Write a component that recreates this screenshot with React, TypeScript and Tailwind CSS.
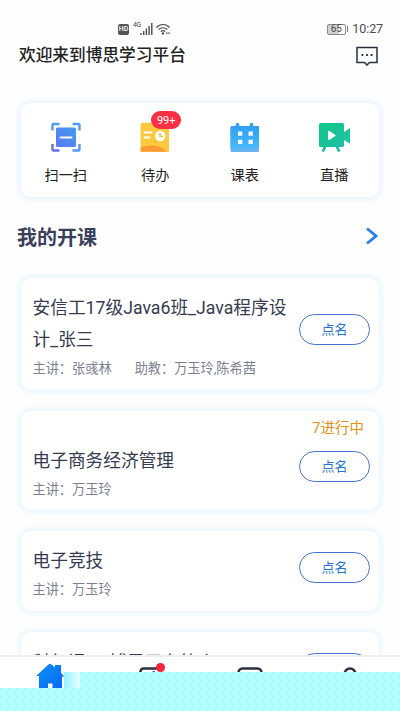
import type { ReactNode } from 'react';

interface Course {
  title: string;
  teacher: string;
  assistant?: string;
  status?: string;
  cardClass: string;
  titleClass: string;
  buttonClass: string;
}

const courses: Course[] = [
  {
    title: '安信工17级Java6班_Java程序设计_张三',
    teacher: '张彧林',
    assistant: '万玉玲,陈希茜',
    cardClass: 'h-[112px] pt-[14px]',
    titleClass: 'leading-8',
    buttonClass: 'mt-[22px]',
  },
  {
    title: '电子商务经济管理',
    teacher: '万玉玲',
    status: '7进行中',
    cardClass: 'h-[99px] pt-[7px]',
    titleClass: 'mt-[27px] leading-8',
    buttonClass: 'mt-[12px]',
  },
  {
    title: '电子竞技',
    teacher: '万玉玲',
    cardClass: 'h-[80px] pt-[14px]',
    titleClass: 'leading-8',
    buttonClass: 'mt-[7px]',
  },
  {
    title: '科幻课7—博思平台简介',
    teacher: '万玉玲',
    cardClass: 'h-[80px] pt-[15px]',
    titleClass: 'leading-8',
    buttonClass: 'mt-[6px]',
  },
];

const ScanIcon = () => (
  <svg width="30" height="30" viewBox="0 0 30 30" fill="none">
    <defs>
      <linearGradient id="scan" x1="0" y1="1" x2="1" y2="0">
        <stop stopColor="#5a78ee" />
        <stop offset="1" stopColor="#459bf5" />
      </linearGradient>
    </defs>
    <path d="M1.500 8.500V3a1 1 0 0 1 1-1H8.500M21.500 2H27.500a1 1 0 0 1 1 1v5.500M28.500 22v5.500a1 1 0 0 1-1 1H21.500" stroke="#4f9af0" strokeWidth="2.400" />
    <path d="M8.500 28.500H2.500a1 1 0 0 1-1-1V22" stroke="#6672dc" strokeWidth="2.400" />
    <rect x="5" y="5.500" width="20" height="19.500" rx="1.500" fill="url(#scan)" />
    <path d="M9.500 15.500h11" stroke="#fff" strokeWidth="2" strokeLinecap="round" />
  </svg>
);

const TodoIcon = () => (
  <svg width="30" height="30" viewBox="0 0 30 30" fill="none">
    <rect x=".6" y=".8" width="28.500" height="29" rx="1.500" fill="#fec93f" />
    <path d="M.6 25.500C9 22 22 23 27 29.800H2a1.400 1.400 0 0 1-1.400-1.400z" fill="#fb9b35" />
    <path d="M4.500 10.500h7M4.500 15.500h5" stroke="#fff" strokeWidth="2" strokeLinecap="round" />
    <circle cx="20.300" cy="14" r="5.200" fill="#fff" />
    <path d="M20 11v3.500h3" stroke="#f6b833" strokeWidth="1.500" />
  </svg>
);

const CalendarIcon = () => (
  <svg width="30" height="30" viewBox="0 0 30 30" fill="none">
    <defs>
      <linearGradient id="cal" x1="0" y1="0" x2="0" y2="1">
        <stop stopColor="#2f9ff2" />
        <stop offset="1" stopColor="#46b9fa" />
      </linearGradient>
    </defs>
    <path d="M7.500 2.500V6M21.500 2.500V6" stroke="#3a9fe8" strokeWidth="3.600" strokeLinecap="round" />
    <rect x=".5" y="4" width="28.500" height="26" rx="1.500" fill="#63b4ef" />
    <path d="M.5 5.500A1.500 1.500 0 0 1 2 4h25.500A1.500 1.500 0 0 1 29 5.500V26H.5z" fill="url(#cal)" />
    <path d="M8 9.500h4.300v4.300H8zM18.500 9.500h4.300v4.300h-4.300zM8 17.800h4.300v4.300H8zM18.500 17.800h4.300v4.300h-4.300z" fill="#fff" />
  </svg>
);

const LiveIcon = () => (
  <svg width="34" height="30" viewBox="0 0 34 30" fill="none">
    <defs>
      <linearGradient id="live" x1="0" y1="0" x2="1" y2="1">
        <stop stopColor="#10c886" />
        <stop offset="1" stopColor="#1fbda5" />
      </linearGradient>
    </defs>
    <path d="m8.500 24-2.800 5.500M19.500 24l2.800 5.500" stroke="#1cb99d" strokeWidth="2.600" />
    <path d="M25 11.500 33 6v15.500L25 17z" fill="#20c3a0" />
    <rect x="2" y="1" width="25" height="24" rx="1.500" fill="url(#live)" />
    <path d="M11 9.500c0-.8.800-1 1.300-.7l5.800 4c.6.400.6 1 0 1.400l-5.800 3.800c-.5.300-1.300 0-1.300-.7z" fill="#fff" />
  </svg>
);

const shortcuts: { label: string; icon: ReactNode; badge?: string }[] = [
  { label: '扫一扫', icon: <ScanIcon /> },
  { label: '待办', icon: <TodoIcon />, badge: '99+' },
  { label: '课表', icon: <CalendarIcon /> },
  { label: '直播', icon: <LiveIcon /> },
];

function StatusBar() {
  return (
    <div className="flex h-[37px] items-end justify-between pr-[17px] pl-[118px] text-[#4c4c4c]">
      <div className="flex h-[16px] items-center">
        <span className="flex h-[11px] w-[11px] items-center justify-center rounded-[2px] bg-[#555] text-[7px] leading-none font-medium text-white">HD</span>
        <span className="ml-[4px] self-start text-[7px] leading-[8px] tracking-[-0.5px]">4G</span>
        <svg width="13" height="12" viewBox="0 0 13 12" className="-ml-px" stroke="currentColor" strokeWidth="1.400">
          <path d="M1 12v-2M3.700 12V8M6.400 12V5.500M9.100 12V3M11.800 12V0" />
        </svg>
        <svg width="14" height="12" viewBox="0 0 14 12" className="ml-[3px]" fill="none" stroke="currentColor" strokeWidth="1.200">
          <path d="M.5 4.500c3.500-4 9.500-4 13 0M2.600 6.700c2.500-2.600 6.300-2.600 8.800 0M4.800 8.600c1.300-1.200 3.100-1.200 4.400 0" />
          <circle cx="7" cy="10.500" r=".6" />
          <path d="M10 10.200h4" strokeDasharray="1.600 .6" />
        </svg>
      </div>
      <div className="flex h-[16px] items-center">
        <div className="flex h-[11px] w-[19px] items-center justify-center rounded-[2px] border border-[#888] bg-linear-to-r from-[#cfcfcf] from-65% to-white to-65% text-[10px] leading-none">65</div>
        <div className="ml-px h-[6px] w-[1.500px] bg-[#777]" />
        <span className="ml-[4px] text-[12.500px] leading-none tracking-[-0.1px]">10:27</span>
      </div>
    </div>
  );
}

function CourseCard({ course }: { course: Course }) {
  return (
    <div className={`flex shrink-0 justify-between rounded-[10px] bg-white pr-[9px] pl-[11.500px] shadow-[0_0_6px_2px_#e4f4fd] ${course.cardClass}`}>
      <div className="w-[264px]">
        <h3 className={`text-[17.700px] text-[#363b50] ${course.titleClass}`}>{course.title}</h3>
        <p className="text-[13.200px] leading-[25px] text-[#7c8190]">
          <span>主讲：{course.teacher}</span>
          {course.assistant && <span className="ml-[23px]">助教：{course.assistant}</span>}
        </p>
      </div>
      <div className="flex shrink-0 flex-col items-end">
        {course.status && <span className="mr-[6px] text-[14.500px] leading-[21px] text-[#e6910f]">{course.status}</span>}
        <button className={`h-[31px] w-[71px] rounded-full border border-[#4573cf] text-[13px] leading-none text-[#2672d2] ${course.buttonClass}`}>
          点名
        </button>
      </div>
    </div>
  );
}

function TabBar() {
  return (
    <nav className="absolute inset-x-0 bottom-0 h-[56px] border-t-2 border-[#eeeeef] bg-white">
      <div className="flex h-full items-start pl-[36px]">
        <svg width="28" height="29" viewBox="0 0 28 29" className="mt-[6px]">
          <defs>
            <linearGradient id="home" x1="0" y1="0" x2="1" y2="1">
              <stop stopColor="#0b91fb" />
              <stop offset="1" stopColor="#0866ee" />
            </linearGradient>
          </defs>
          <path d="M0 13 12.500 1.500q1.500-1.300 3 0L19 4.500V2h6v8l3.500 3.500H26V29H3V13z" fill="url(#home)" />
          <path d="M12 29v-8.500h4.500V29z" fill="#fff" />
        </svg>
        <div className="relative mt-[10px] ml-[75px]">
          <svg width="24" height="24" viewBox="0 0 24 24" fill="none" stroke="#2b3042" strokeWidth="2.600">
            <path d="M1.500 22V4.500a3 3 0 0 1 3-3H19M12 7l4-2" />
          </svg>
          <span className="absolute -top-[4px] left-[17px] h-[9px] w-[9px] rounded-full bg-[#f5223a]" />
        </div>
        <svg width="26" height="24" viewBox="0 0 26 24" className="mt-[10px] ml-[74px]" fill="none" stroke="#2b3042" strokeWidth="2.600">
          <rect x="1.500" y="1.500" width="23" height="20" rx="4" />
        </svg>
        <svg width="20" height="24" viewBox="0 0 20 24" className="mt-[10px] ml-[77px]" fill="none" stroke="#2b3042" strokeWidth="2.600">
          <circle cx="10" cy="7" r="5.500" />
        </svg>
      </div>
      {/* dotted wash over the lower part of the bar */}
      <svg width="400" height="39" viewBox="0 0 400 39" className="absolute bottom-0 left-0">
        <defs>
          <pattern id="dots" width="8" height="8" patternUnits="userSpaceOnUse">
            <rect width="8" height="8" fill="#b1fffe" />
            <rect width="1" height="1" fill="#7eeaf5" />
          </pattern>
          <linearGradient id="fade">
            <stop stopColor="#93f4ff" />
            <stop offset="1" stopColor="#e9fcff" />
          </linearGradient>
        </defs>
        <path d="M0 16h80V0h320v39H0z" fill="url(#dots)" />
        <path d="M64 0h16v16H64z" fill="url(#fade)" />
      </svg>
    </nav>
  );
}

export default function App() {
  return (
    <div className="relative h-[711px] w-[400px] overflow-hidden bg-[#fefefe] font-[Roboto,'Noto_Sans_CJK_SC',sans-serif]">
      <StatusBar />
      <header className="flex h-[38px] items-center justify-between pr-[22px] pl-[19px]">
        <h1 className="pt-px text-[16.700px] leading-none font-medium text-[#222]">欢迎来到博思学习平台</h1>
        <svg width="22" height="20" viewBox="0 0 22 20" fill="none" stroke="#26323f" strokeWidth="1.500">
          <path d="M1 1.500h20v15h-7.500L11 19l-2.500-2.500H1z" />
          <path d="M5.500 9h1.800M10.100 9h1.800M14.700 9h1.800" strokeWidth="1.800" />
        </svg>
      </header>

      <section className="mx-[21px] mt-[28px] flex h-[94px] rounded-[10px] bg-white shadow-[0_0_6px_2px_#e4f1fd]">
        {shortcuts.map((item) => (
          <div key={item.label} className="flex flex-1 flex-col items-center pt-[19px]">
            <div className="relative">
              {item.icon}
              {item.badge && (
                <span className="absolute -top-[11px] left-[11px] flex h-[18px] w-[30px] items-center justify-center rounded-full bg-[#fb3045] text-[11px] leading-none text-white">
                  {item.badge}
                </span>
              )}
            </div>
            <span className="mt-[13px] text-[14.200px] leading-[20px] text-[#222]">{item.label}</span>
          </div>
        ))}
      </section>

      <div className="mt-[21px] flex h-[38px] items-center justify-between pr-[22px] pl-[17px]">
        <h2 className="pt-[2px] text-[20px] leading-none font-bold text-[#3a3f5c]">我的开课</h2>
        <svg width="12" height="18" viewBox="0 0 12 18" className="mb-[2px]" fill="none" stroke="#267fe6" strokeWidth="2.800">
          <path d="m1 1.500 9 7.500-9 7.500" />
        </svg>
      </div>

      <main className="mx-[21px] mt-[22px] flex flex-col gap-[21px]">
        {courses.map((course) => (
          <CourseCard key={course.title} course={course} />
        ))}
      </main>
      <TabBar />
    </div>
  );
}
